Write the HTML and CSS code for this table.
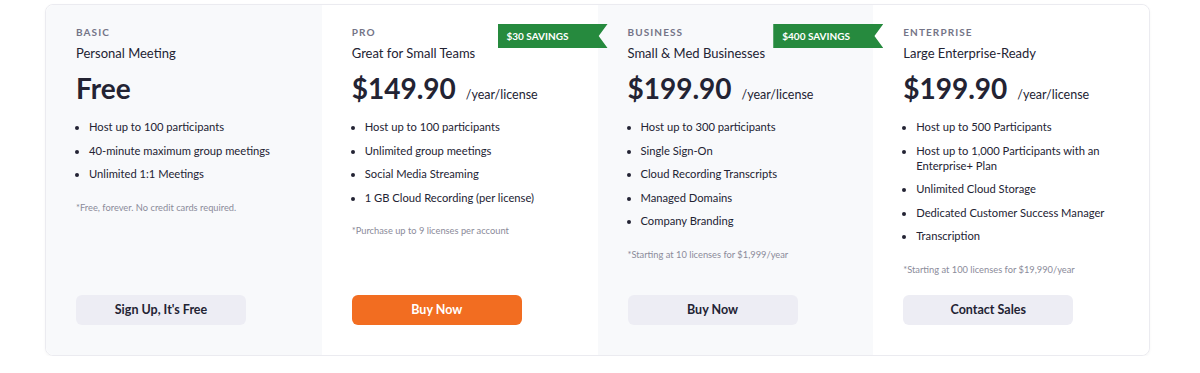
FILE: index.html
```html
<!DOCTYPE html>
<html lang="en">
<head>
    <meta charset="UTF-8">
    <meta name="viewport" content="width=device-width, initial-scale=1.0">
    <title>Plans &amp; Pricing</title>
    <link rel="stylesheet" href="styles.css">
</head>
<body>
    <div class="plans">
        <div class="plan plan-tinted">
            <div class="plan-tier">Basic</div>
            <div class="plan-name">Personal Meeting</div>
            <div class="plan-price"><span class="amount">Free</span></div>
            <ul class="plan-features">
                <li>Host up to 100 participants</li>
                <li>40-minute maximum group meetings</li>
                <li>Unlimited 1:1 Meetings</li>
            </ul>
            <p class="plan-note">*Free, forever. No credit cards required.</p>
            <a href="#" class="plan-button">Sign Up, It's Free</a>
        </div>
        <div class="plan">
            <div class="badge">$30 SAVINGS</div>
            <div class="plan-tier">Pro</div>
            <div class="plan-name">Great for Small Teams</div>
            <div class="plan-price"><span class="amount">$149.90</span><span class="period">/year/license</span></div>
            <ul class="plan-features">
                <li>Host up to 100 participants</li>
                <li>Unlimited group meetings</li>
                <li>Social Media Streaming</li>
                <li>1 GB Cloud Recording (per license)</li>
            </ul>
            <p class="plan-note">*Purchase up to 9 licenses per account</p>
            <a href="#" class="plan-button primary">Buy Now</a>
        </div>
        <div class="plan plan-tinted">
            <div class="badge">$400 SAVINGS</div>
            <div class="plan-tier">Business</div>
            <div class="plan-name">Small &amp; Med Businesses</div>
            <div class="plan-price"><span class="amount">$199.90</span><span class="period">/year/license</span></div>
            <ul class="plan-features">
                <li>Host up to 300 participants</li>
                <li>Single Sign-On</li>
                <li>Cloud Recording Transcripts</li>
                <li>Managed Domains</li>
                <li>Company Branding</li>
            </ul>
            <p class="plan-note">*Starting at 10 licenses for $1,999/year</p>
            <a href="#" class="plan-button">Buy Now</a>
        </div>
        <div class="plan">
            <div class="plan-tier">Enterprise</div>
            <div class="plan-name">Large Enterprise-Ready</div>
            <div class="plan-price"><span class="amount">$199.90</span><span class="period">/year/license</span></div>
            <ul class="plan-features">
                <li>Host up to 500 Participants</li>
                <li>Host up to 1,000 Participants with an Enterprise+ Plan</li>
                <li>Unlimited Cloud Storage</li>
                <li>Dedicated Customer Success Manager</li>
                <li>Transcription</li>
            </ul>
            <p class="plan-note">*Starting at 100 licenses for $19,990/year</p>
            <a href="#" class="plan-button">Contact Sales</a>
        </div>
    </div>
</body>
</html>
```

FILE: styles.css
```css
body {
    margin: 0;
    background: #fff;
    font-family: Lato, "Open Sans", sans-serif;
    color: #232333;
}

.plans {
    display: grid;
    grid-template-columns: repeat(4, 1fr);
    width: 1105px;
    height: 352px;
    margin: 4px 0 0 45px;
    box-sizing: border-box;
    border: 1px solid #ebebf0;
    border-radius: 8px;
    box-shadow: 0 1px 3px rgba(0, 0, 0, 0.04);
}

.plan {
    position: relative;
    display: flex;
    flex-direction: column;
    padding: 21px 30px 30px 30px;
    background: #fff;
}

.plan-tinted {
    background: #f8f9fb;
}

.plan:first-child {
    border-radius: 8px 0 0 8px;
}

.plan:last-child {
    border-radius: 0 8px 8px 0;
}

.plan-tier {
    font-size: 10px;
    font-weight: 700;
    letter-spacing: 1.1px;
    text-transform: uppercase;
    color: #747487;
    line-height: 12px;
}

.plan-name {
    margin-top: 7px;
    font-size: 13px;
    line-height: 16px;
}

.plan-price {
    display: flex;
    align-items: baseline;
    margin-top: 9px;
}

.amount {
    font-size: 28px;
    font-weight: 700;
    line-height: 36px;
}

.period {
    margin-left: 10px;
    font-size: 12.5px;
}

.plan-features {
    margin: 13px 0 0 0;
    padding: 0 0 0 13px;
    font-size: 11.2px;
    line-height: 15px;
}

.plan-features li {
    margin-bottom: 8.5px;
}

.plan-note {
    margin: 12px 0 0 0;
    font-size: 9.3px;
    color: #8b8b9a;
}

.plan-button {
    display: block;
    margin-top: auto;
    width: 170px;
    height: 30px;
    line-height: 30px;
    border-radius: 6px;
    background: #ededf4;
    color: #232333;
    font-size: 12.5px;
    font-weight: 700;
    text-align: center;
    text-decoration: none;
}

.plan-button.primary {
    background: #f26d21;
    color: #fff;
}

.badge {
    position: absolute;
    top: 19px;
    right: -10px;
    width: 110px;
    height: 24px;
    padding-left: 9px;
    box-sizing: border-box;
    background: #268a3e;
    color: #fff;
    font-size: 10px;
    font-weight: 700;
    line-height: 24px;
    clip-path: polygon(0 0, 100% 0, 92% 50%, 100% 100%, 0 100%);
    z-index: 1;
}
```
